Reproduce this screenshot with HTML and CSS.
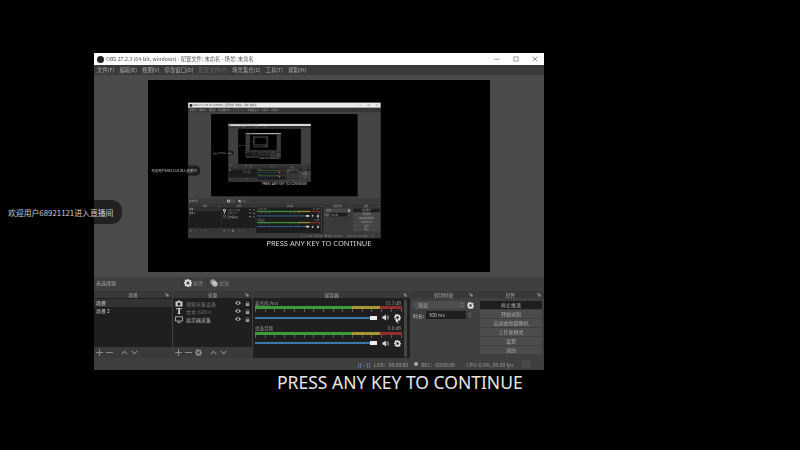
FILE: index.html
```html
<!DOCTYPE html>
<html lang="zh-CN">
<head>
    <meta charset="UTF-8">
    <title>OBS 27.2.3</title>
    <link rel="stylesheet" href="styles.css">
</head>
<body>
    <svg class="sprites" width="0" height="0">
      <symbol id="gear" viewBox="0 0 16 16"><path fill="currentColor" fill-rule="evenodd" d="M6.600 0h2.800l.4 2.200 1.300.6L13 1.500l2 2-1.300 1.900.6 1.300 2.200.4v2.800l-2.200.4-.6 1.300 1.300 1.900-2 2-1.900-1.300-1.300.6-.4 2.200H6.600l-.4-2.200-1.300-.6L3 14.500l-2-2 1.300-1.900-.6-1.300L-.2 8.900V6.100l2.200-.4.6-1.300L1.300 2.500l2-2 1.900 1.300 1.300-.6zM8 5a3 3 0 1 0 0 6 3 3 0 0 0 0-6z"/></symbol>
      <symbol id="filter" viewBox="0 0 16 16"><circle cx="6" cy="6" r="5.500" fill="#999"/><circle cx="10" cy="10" r="5.500" fill="#ddd" opacity=".75"/></symbol>
      <symbol id="speaker" viewBox="0 0 16 16"><path fill="currentColor" d="M1 5h3l5-4v14l-5-4H1z"/><path fill="none" stroke="currentColor" stroke-width="1.500" d="M11 5c1.300 1.800 1.300 4.200 0 6M13 3c2.300 3 2.300 7 0 10"/></symbol>
      <symbol id="eye" viewBox="0 0 16 10"><path fill="currentColor" fill-rule="evenodd" d="M0 5c4-6.500 12-6.500 16 0-4 6.500-12 6.500-16 0zm8-3a3 3 0 1 0 0 6 3 3 0 0 0 0-6z"/></symbol>
      <symbol id="lock" viewBox="0 0 12 14"><path fill="currentColor" d="M1 6h10v8H1z"/><path fill="none" stroke="currentColor" stroke-width="1.500" d="M3 6V4a3 3 0 0 1 6 0v2"/></symbol>
      <symbol id="camera" viewBox="0 0 16 14"><path fill="currentColor" fill-rule="evenodd" d="M1 3h4l1-2h4l1 2h4v10H1zm7 2a3 3 0 1 0 0 6 3 3 0 0 0 0-6z"/></symbol>
      <symbol id="monitor" viewBox="0 0 16 14"><path fill="none" stroke="currentColor" stroke-width="1.500" d="M1 1.500h14v8.500H1zM5 13h6"/></symbol>
      <symbol id="plus" viewBox="0 0 12 12"><path stroke="currentColor" stroke-width="1.800" d="M6 0v12M0 6h12"/></symbol>
      <symbol id="minus" viewBox="0 0 12 12"><path stroke="currentColor" stroke-width="1.800" d="M0 6h12"/></symbol>
      <symbol id="up" viewBox="0 0 12 12"><path fill="none" stroke="currentColor" stroke-width="1.800" d="M1 9l5-5 5 5"/></symbol>
      <symbol id="down" viewBox="0 0 12 12"><path fill="none" stroke="currentColor" stroke-width="1.800" d="M1 3l5 5 5-5"/></symbol>
      <symbol id="pop" viewBox="0 0 10 10"><path fill="currentColor" d="M1 1h5v2H3v2H1zM4 4h5v5H4z"/></symbol>
    </svg>

    <div class="screen" id="screen">
      <div class="obsWindow">
        <div class="titleBar">
          <span class="obsLogo"></span>
          <span class="titleText">OBS 27.2.3 (64-bit, windows) - 配置文件: 未命名 - 场景: 未命名</span>
          <span class="winButtons">
            <svg class="winIcon" viewBox="0 0 10 10"><path stroke="#555" d="M1 5.500h8"/></svg>
            <svg class="winIcon" viewBox="0 0 10 10"><path fill="none" stroke="#555" d="M1.500 1.500h7v7h-7z"/></svg>
            <svg class="winIcon" viewBox="0 0 10 10"><path stroke="#555" d="M1 1l8 8M9 1l-8 8"/></svg>
          </span>
        </div>
        <div class="menuBar">
          <span>文件(F)</span><span>编辑(E)</span><span>视图(V)</span><span>停靠窗口(D)</span>
          <span class="menuDim">配置文件(P)</span><span>场景集合(S)</span><span>工具(T)</span><span>帮助(H)</span>
        </div>
        <div class="stage">
          <div class="preview"></div>
        </div>
        <div class="contextBar">
          <span class="contextLabel">未选择源</span>
          <span class="contextBtn"><svg class="icon8"><use href="#gear"/></svg>属性</span>
          <span class="contextBtn"><svg class="icon8"><use href="#filter"/></svg>滤镜</span>
        </div>
        <div class="docks">
          <section class="dock dockScenes">
            <div class="dockTitle">场景<svg class="popIcon"><use href="#pop"/></svg></div>
            <div class="dockList">
              <div class="listRow listRowActive">场景</div>
              <div class="listRow">场景 2</div>
            </div>
            <div class="dockTools">
              <svg class="toolIcon"><use href="#plus"/></svg>
              <svg class="toolIcon"><use href="#minus"/></svg>
              <svg class="toolIcon toolGap"><use href="#up"/></svg>
              <svg class="toolIcon"><use href="#down"/></svg>
            </div>
          </section>
          <section class="dock dockSources">
            <div class="dockTitle">来源<svg class="popIcon"><use href="#pop"/></svg></div>
            <div class="dockList">
              <div class="sourceRow sourceDim"><svg class="sourceIcon"><use href="#camera"/></svg><span class="sourceName">视频采集设备</span><svg class="eyeIcon"><use href="#eye"/></svg><svg class="lockIcon"><use href="#lock"/></svg></div>
              <div class="sourceRow sourceDim"><span class="sourceT">T</span><span class="sourceName">文本 (GDI+)</span><svg class="eyeIcon"><use href="#eye"/></svg><svg class="lockIcon"><use href="#lock"/></svg></div>
              <div class="sourceRow"><svg class="sourceIcon"><use href="#monitor"/></svg><span class="sourceName">显示器采集</span><svg class="eyeIcon"><use href="#eye"/></svg><svg class="lockIcon"><use href="#lock"/></svg></div>
            </div>
            <div class="dockTools">
              <svg class="toolIcon"><use href="#plus"/></svg>
              <svg class="toolIcon"><use href="#minus"/></svg>
              <svg class="toolIcon"><use href="#gear"/></svg>
              <svg class="toolIcon toolGap"><use href="#up"/></svg>
              <svg class="toolIcon"><use href="#down"/></svg>
            </div>
          </section>
          <section class="dock dockMixer">
            <div class="dockTitle">混音器<svg class="popIcon"><use href="#pop"/></svg></div>
            <div class="mixerBody">
              <div class="mixerTracks">
                <div class="track">
                  <div class="trackHead"><span>麦克风/Aux</span><span>15.7 dB</span></div>
                  <div class="meter"></div>
                  <div class="ticks"></div>
                  <div class="trackControls">
                    <div class="fader"><span class="faderKnob"></span></div>
                    <svg class="trackIcon"><use href="#speaker"/></svg>
                    <svg class="trackIcon"><use href="#gear"/></svg>
                  </div>
                </div>
                <div class="track">
                  <div class="trackHead"><span>桌面音频</span><span>0.0 dB</span></div>
                  <div class="meter"></div>
                  <div class="ticks"></div>
                  <div class="trackControls">
                    <div class="fader"><span class="faderKnob"></span></div>
                    <svg class="trackIcon"><use href="#speaker"/></svg>
                    <svg class="trackIcon"><use href="#gear"/></svg>
                  </div>
                </div>
              </div>
              <div class="scrollBar"></div>
              <svg class="cursor" viewBox="0 0 8 12"><path fill="#fff" stroke="#000" stroke-width=".6" d="M1 1v8l2-2 1.500 3.500 1.500-.7L4.500 6.500H7z"/></svg>
            </div>
          </section>
          <section class="dock dockTransitions">
            <div class="dockTitle">转场特效<svg class="popIcon"><use href="#pop"/></svg></div>
            <div class="transBody">
              <div class="transRow">
                <span class="transSelect">渐变<span class="spinner"><svg class="spinIcon"><use href="#up"/></svg><svg class="spinIcon"><use href="#down"/></svg></span></span>
                <svg class="trackIcon"><use href="#gear"/></svg>
              </div>
              <div class="transRow">
                <span class="transLabel">时长:</span>
                <span class="transInput">300 ms</span>
                <span class="spinner"><svg class="spinIcon"><use href="#up"/></svg><svg class="spinIcon"><use href="#down"/></svg></span>
              </div>
            </div>
          </section>
          <section class="dock dockControls">
            <div class="dockTitle">控件<svg class="popIcon"><use href="#pop"/></svg></div>
            <div class="controlsBody">
              <span class="controlBtn controlActive">停止推流</span>
              <span class="controlBtn">开始录制</span>
              <span class="controlBtn">启动虚拟摄像机</span>
              <span class="controlBtn">工作室模式</span>
              <span class="controlBtn">设置</span>
              <span class="controlBtn">退出</span>
            </div>
          </section>
        </div>
        <div class="statusBar">
          <span class="statusLive">((•))</span><span>LIVE:</span><span>00:00:00</span>
          <span class="statusDot"></span><span>REC:</span><span>00:00:00</span>
          <span class="statusCpu">CPU: 0.0%, 00.00 fps</span>
          <span class="statusGrip"></span>
        </div>
      </div>
      <div class="toast">欢迎用户68921121进入直播间</div>
      <div class="caption">PRESS ANY KEY TO CONTINUE</div>
    </div>
    <script src="app.js"></script>
</body>
</html>
```

FILE: styles.css
```css
:root {
    --panel-color: #3f3f3f;
    --stage-color: #4a4a4a;
    --list-color: #1f1f1f;
    --text-color: #c8c8c8;
    --button-color: #4c4c4c;
}
html, body {
    margin: 0;
    height: 100%;
    overflow: hidden;
    background-color: #000;
}
body {
    font-family: "Noto Sans CJK SC", "Noto Sans", sans-serif;
    color: var(--text-color);
}
.sprites {
    position: absolute;
}
.screen {
    position: relative;
    width: 800px;
    height: 450px;
    overflow: hidden;
    background-color: #000;
}
.obsWindow {
    position: absolute;
    left: 94px;
    top: 53px;
    width: 450px;
    height: 317px;
    display: flex;
    flex-direction: column;
    background-color: var(--panel-color);
    filter: blur(0.4px);
}
.titleBar {
    height: 12px;
    display: flex;
    align-items: center;
    padding-left: 3px;
    background-color: #fff;
    color: #555;
    font-size: 5.3px;
    flex: none;
}
.obsLogo {
    width: 7px;
    height: 7px;
    margin-right: 2px;
    border-radius: 50%;
    background-color: #222;
}
.winButtons {
    margin-left: auto;
    display: flex;
    gap: 13px;
    padding-right: 6px;
}
.winIcon {
    width: 6px;
    height: 6px;
}
.menuBar {
    height: 10px;
    display: flex;
    gap: 5px;
    align-items: center;
    padding-left: 3px;
    background-color: #3a3a3a;
    font-size: 5.4px;
    color: #aaa;
    flex: none;
}
.menuDim {
    color: #666;
}
.stage {
    flex: 1;
    display: flex;
    justify-content: center;
    padding-top: 5px;
    background-color: var(--stage-color);
}
.preview {
    position: relative;
    width: 342px;
    height: 192px;
    overflow: hidden;
    background-color: #000;
}
.previewScreen {
    position: absolute;
    left: 0;
    top: 0;
    transform: scale(0.4275);
    transform-origin: 0 0;
    filter: blur(0.8px) brightness(0.92);
}
.contextBar {
    height: 14px;
    display: flex;
    align-items: center;
    padding-bottom: 3px;
    box-sizing: border-box;
    font-size: 5px;
    color: #aaa;
    background-color: var(--panel-color);
    flex: none;
}
.contextLabel {
    width: 85px;
    padding-left: 2px;
}
.contextBtn {
    display: flex;
    align-items: center;
    gap: 1px;
    width: 22px;
    padding-left: 2px;
    margin-right: 1px;
    color: #888;
    border-left: 1px solid #333;
}
.icon8 {
    width: 8px;
    height: 8px;
    color: #ddd;
}
.docks {
    height: 67px;
    display: flex;
    gap: 1px;
    background-color: var(--panel-color);
    flex: none;
}
.dock {
    display: flex;
    flex-direction: column;
}
.dockScenes {
    width: 78px;
}
.dockSources {
    width: 79px;
}
.dockMixer {
    width: 157px;
}
.dockTransitions {
    width: 65px;
}
.dockControls {
    width: 67px;
}
.dockTitle {
    position: relative;
    height: 7px;
    line-height: 7px;
    text-align: center;
    font-size: 4.8px;
    color: #aaa;
    background-color: #383838;
    flex: none;
}
.popIcon {
    position: absolute;
    right: 3px;
    top: 1.5px;
    width: 4px;
    height: 4px;
    color: #999;
}
.dockList {
    height: 48px;
    padding-top: 1px;
    background-color: var(--list-color);
    font-size: 5px;
}
.listRow {
    height: 8px;
    line-height: 8px;
    padding-left: 2px;
    color: #ccc;
}
.listRowActive {
    background-color: #333;
}
.sourceRow {
    height: 8px;
    display: flex;
    align-items: center;
    padding: 0 2px;
    color: #bbb;
}
.sourceDim .sourceName {
    color: #777;
}
.sourceIcon {
    width: 8px;
    height: 7px;
    margin-right: 3px;
    color: #ccc;
    flex: none;
}
.sourceT {
    width: 8px;
    margin-right: 3px;
    font-family: "Liberation Serif", serif;
    font-weight: bold;
    font-size: 8.5px;
    line-height: 8px;
    text-align: center;
    color: #eee;
    flex: none;
}
.sourceName {
    flex: 1;
}
.eyeIcon {
    width: 6px;
    height: 4px;
    margin-right: 4px;
    color: #aaa;
}
.lockIcon {
    width: 5px;
    height: 5px;
    color: #999;
}
.dockTools {
    height: 11px;
    display: flex;
    align-items: center;
    gap: 3px;
    padding-left: 2px;
    background-color: #3a3a3a;
    color: #888;
}
.toolIcon {
    width: 7px;
    height: 7px;
}
.toolGap {
    margin-left: 5px;
}
.mixerBody {
    position: relative;
    flex: 1;
    display: flex;
    background-color: var(--list-color);
}
.mixerTracks {
    flex: 1;
    padding: 2.5px 2px 0;
    display: flex;
    flex-direction: column;
    gap: 1.5px;
}
.track {
    height: 24px;
}
.trackHead {
    height: 5px;
    line-height: 5px;
    display: flex;
    justify-content: space-between;
    font-size: 4.5px;
    color: #999;
    padding-right: 1px;
}
.meter {
    height: 3px;
    margin-top: 0.5px;
    background: linear-gradient(90deg, #3f9a3a 0 66%, #a39a35 66% 85%, #8f2f30 85% 100%);
}
.ticks {
    height: 3px;
    background: repeating-linear-gradient(90deg, #777 0 1px, transparent 1px 9.7px);
    opacity: 0.7;
}
.trackControls {
    display: flex;
    align-items: center;
    gap: 5px;
    margin-top: 1.5px;
    height: 8px;
}
.fader {
    position: relative;
    width: 122px;
    height: 2px;
    background-color: #3d78ab;
}
.faderKnob {
    position: absolute;
    right: 0;
    top: -1px;
    width: 7px;
    height: 4px;
    background-color: #eee;
}
.trackIcon {
    width: 7px;
    height: 7px;
    color: #ddd;
    flex: none;
}
.scrollBar {
    width: 3px;
    margin: 1px 3px 1px 0;
    border-radius: 2px;
    background-color: #444;
}
.cursor {
    position: absolute;
    left: 142px;
    top: 19px;
    width: 5px;
    height: 8px;
}
.transBody {
    flex: 1;
    padding: 3px 2px 0;
    display: flex;
    flex-direction: column;
    gap: 2px;
    font-size: 5px;
}
.transRow {
    display: flex;
    align-items: center;
    gap: 2px;
    height: 8px;
}
.transSelect {
    flex: 1;
    height: 8px;
    line-height: 8px;
    display: flex;
    justify-content: space-between;
    padding: 0 1px 0 5px;
    color: #aaa;
    background-color: #4d4d4d;
}
.transLabel {
    color: #bbb;
    white-space: nowrap;
}
.transInput {
    width: 38px;
    height: 8px;
    line-height: 8px;
    padding-left: 2px;
    color: #bbb;
    white-space: nowrap;
    background-color: #1f1f1f;
    flex: none;
}
.spinner {
    display: flex;
    flex-direction: column;
    justify-content: center;
    color: #aaa;
}
.spinIcon {
    width: 4px;
    height: 3px;
}
.controlsBody {
    flex: 1;
    padding: 2.5px 2px 0 3px;
    display: flex;
    flex-direction: column;
    gap: 1.1px;
}
.controlBtn {
    height: 8px;
    line-height: 8px;
    text-align: center;
    font-size: 5px;
    color: #aaa;
    background-color: var(--button-color);
}
.controlActive {
    background-color: #1e1e1e;
    color: #bbb;
}
.statusBar {
    height: 12px;
    display: flex;
    align-items: center;
    justify-content: flex-end;
    gap: 3.5px;
    font-size: 5px;
    white-space: nowrap;
    color: #999;
    background-color: var(--panel-color);
    flex: none;
}
.statusLive {
    font-weight: bold;
    color: #6a8fd8;
}
.statusDot {
    width: 4px;
    height: 4px;
    margin-left: 2px;
    border-radius: 50%;
    background-color: #aaa;
}
.statusCpu {
    margin-left: 8px;
}
.statusGrip {
    width: 8px;
    height: 8px;
    margin-left: 5px;
    margin-right: 14px;
    background-color: #4a4a4a;
}
.toast {
    position: absolute;
    left: 0;
    top: 200px;
    width: 114px;
    height: 24px;
    line-height: 26px;
    padding-left: 8px;
    border-radius: 0 10px 10px 0;
    font-size: 7.85px;
    white-space: nowrap;
    color: #cfcfcf;
    background-color: rgba(0, 0, 0, 0.55);
}
.caption {
    position: absolute;
    left: 277px;
    top: 370px;
    font-family: "Noto Sans", sans-serif;
    font-size: 17.5px;
    line-height: 24px;
    white-space: nowrap;
    color: #e6e6e6;
}
```

FILE: app.js
```js
// the preview shows the whole screen again, so fill it with copies of itself
const template = document.getElementById("screen").cloneNode(true);
template.removeAttribute("id");

let slot = document.querySelector("#screen .preview");
for (let depth = 0; depth < 4; depth++) {
    const copy = template.cloneNode(true);
    copy.classList.add("previewScreen");
    slot.appendChild(copy);
    slot = copy.querySelector(".preview");
}
```
